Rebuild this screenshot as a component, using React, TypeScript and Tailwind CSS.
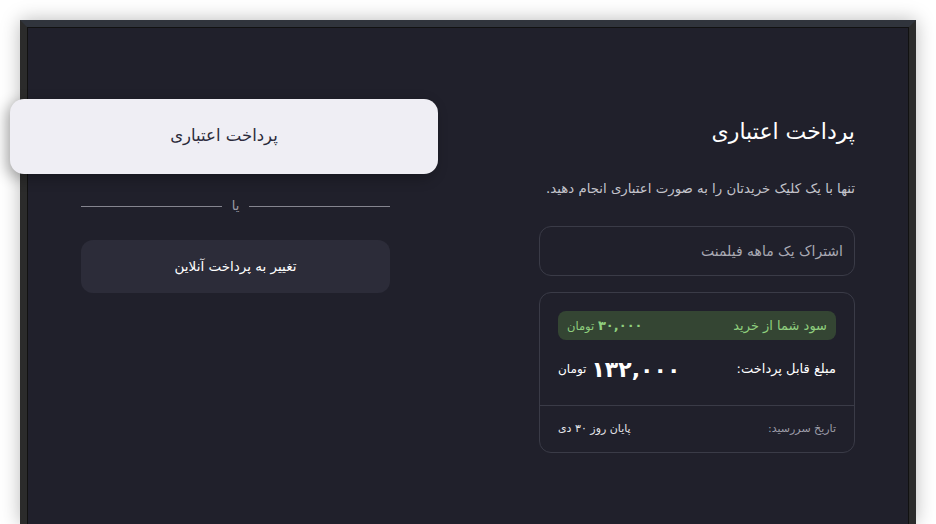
export default function App() {
  return (
    <div
      className="min-h-[524px] bg-white pl-[20px] pt-[20px]"
      style={{ fontFamily: '"DejaVu Sans", "Noto Sans", sans-serif' }}
    >
      <div className="relative w-[896px] border-[7px] border-b-0 border-[#2b2b2b] border-t-[#30343c] shadow-[0_0_18px_rgba(0,0,0,0.28)]">
        <div
          dir="rtl"
          className="flex h-[497px] justify-between border border-b-0 border-[#111111] bg-[#20202b] px-[53px]"
        >
          <section className="w-[316px] pt-[88px] text-right">
            <h1 className="text-[22px] leading-[32px] font-medium text-white">پرداخت اعتباری</h1>
            <p className="mt-[31px] text-[13.3px] leading-[20px] text-[#c4c4cc]">
              تنها با یک کلیک خریدتان را به صورت اعتباری انجام دهید.
            </p>
            <div className="mt-[27px] flex h-[50px] items-center rounded-xl border border-[#3a3b47] px-[11px] text-[14px] text-[#a9a9b3]">
              اشتراک یک ماهه فیلمنت
            </div>
            <div className="mt-[16px] rounded-xl border border-[#3a3b47]">
              <div className="border-b border-[#3a3b47] px-[18px] pt-[18px] pb-[18px]">
                <div className="flex h-[29px] items-center justify-between rounded-lg bg-[#344533] px-[9px] text-[13px] text-[#8fcf7e]">
                  <span>سود شما از خرید</span>
                  <span className="text-[11.5px]">
                    <b className="text-[13px] font-bold">۳۰,۰۰۰</b> تومان
                  </span>
                </div>
                <div className="mt-[11px] flex h-[36px] items-center justify-between text-white">
                  <span className="text-[13px]">مبلغ قابل پرداخت:</span>
                  <span className="flex items-center gap-[5px] text-[12px]">
                    <b className="text-[22px] font-bold">۱۳۲,۰۰۰</b>
                    <span>تومان</span>
                  </span>
                </div>
              </div>
              <div className="flex h-[46px] items-center justify-between px-[18px] text-[11px]">
                <span className="text-[#9d9da8]">تاریخ سررسید:</span>
                <span className="text-[#e6e6ea]">پایان روز ۳۰ دی</span>
              </div>
            </div>
          </section>

          <section className="w-[309px] pt-[168px]">
            <div className="flex h-[20px] items-center gap-[10px] text-[13px] text-[#9a9aa5]">
              <div className="h-px flex-1 bg-[#85858f]" />
              <span>یا</span>
              <div className="h-px flex-1 bg-[#85858f]" />
            </div>
            <button className="mt-[24px] flex h-[53px] w-full items-center justify-center rounded-xl bg-[#2c2c39] text-[13.5px] font-medium text-white">
              تغییر به پرداخت آنلاین
            </button>
          </section>
        </div>

        <div className="absolute left-[-17px] top-[72px] flex h-[75px] w-[428px] items-center justify-center rounded-[14px] bg-[#efeef4] text-[16.5px] text-[#2a2a3a] shadow-[-4px_4px_14px_rgba(0,0,0,0.3)]">
          پرداخت اعتباری
        </div>
      </div>
    </div>
  );
}
